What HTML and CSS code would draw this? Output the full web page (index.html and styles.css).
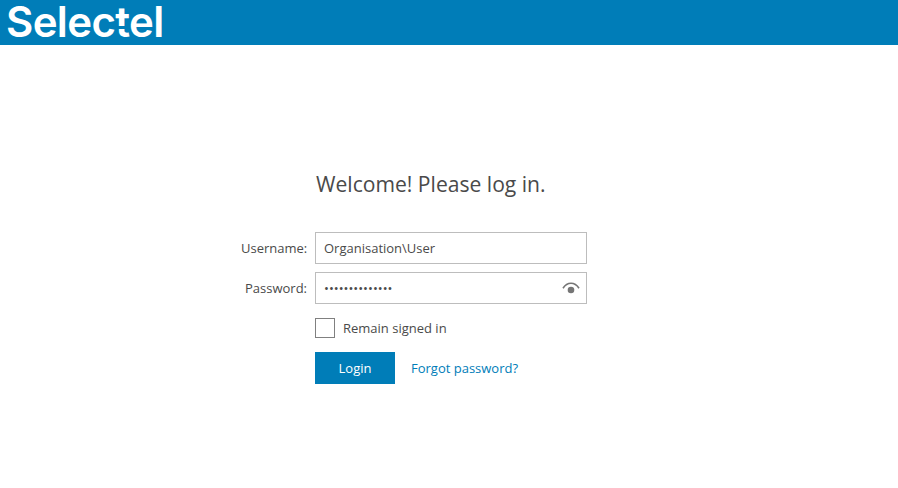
FILE: index.html
```html
<!DOCTYPE html>
<html lang="en">
<head>
  <meta charset="UTF-8">
  <meta name="viewport" content="width=device-width, initial-scale=1.0">
  <title>Login</title>
  <link rel="stylesheet" href="styles.css">
</head>
<body>
  <header class="top-bar">
    <span class="logo">Selectel</span>
  </header>

  <main class="login">
    <h1 class="login-title">Welcome! Please log in.</h1>

    <form class="login-form">
      <label class="field-label" for="username">Username:</label>
      <input class="field-input" type="text" id="username" value="Organisation\User">

      <label class="field-label" for="password">Password:</label>
      <div class="password-box">
        <input class="field-input" type="password" id="password" value="12345678901234">
        <svg class="eye" width="18" height="12" viewBox="0 0 18 12">
          <path d="M1 6.2C3.2 2.8 5.9 1.2 9 1.2s5.8 1.6 8 5" fill="none" stroke="#757575" stroke-width="1.6"/>
          <circle cx="9" cy="8" r="3.3" fill="#757575"/>
        </svg>
      </div>

      <div class="remain">
        <input class="remain-check" type="checkbox" id="remain">
        <label for="remain">Remain signed in</label>
      </div>

      <div class="actions">
        <button class="login-btn" type="button">Login</button>
        <a class="forgot" href="#">Forgot password?</a>
      </div>
    </form>
  </main>
</body>
</html>
```

FILE: styles.css
```css
body {
  font-family: "Open Sans", Arial, sans-serif;
  font-size: 13px;
  color: #4a4a4a;
  margin: 0;
  padding: 0;
  background: #fff;
}

.top-bar {
  background: #007db8;
  height: 45px;
  padding-top: 1px;
  padding-left: 6px;
  box-sizing: border-box;
}

.logo {
  display: block;
  position: relative;
  color: #fff;
  font-family: Inter, "Open Sans", sans-serif;
  font-size: 42px;
  font-weight: 600;
  line-height: 41px;
  letter-spacing: -0.65px;
}

/* break in the stem of the t */
.logo::after {
  content: "";
  position: absolute;
  left: 111px;
  top: 25px;
  width: 10px;
  height: 3px;
  background: #007db8;
}

.login {
  padding: 125px 0 0 241px;
}

.login-title {
  font-size: 21.1px;
  font-weight: 400;
  line-height: 28px;
  color: #4a4a4a;
  margin: 0 0 34px 75px;
  white-space: nowrap;
}

.login-form {
  display: grid;
  grid-template-columns: 66px 272px;
  column-gap: 8px;
  row-gap: 8px;
  align-items: center;
}

.field-label {
  text-align: right;
  white-space: nowrap;
}

.field-input {
  display: block;
  width: 100%;
  height: 32px;
  box-sizing: border-box;
  border: 1px solid #bdbdbd;
  padding: 0 8px;
  font-family: inherit;
  font-size: 13px;
  color: #4a4a4a;
  border-radius: 0;
  outline: none;
}

.password-box {
  position: relative;
}

.eye {
  position: absolute;
  right: 7px;
  top: 10px;
}

.remain {
  grid-column: 2;
  display: flex;
  align-items: center;
  gap: 8px;
  height: 20px;
  margin-top: 6px;
}

.remain-check {
  appearance: none;
  width: 20px;
  height: 20px;
  margin: 0;
  border: 1px solid #808080;
  background: #fff;
}

.actions {
  grid-column: 2;
  display: flex;
  align-items: center;
  gap: 16px;
  margin-top: 6px;
}

.login-btn {
  width: 80px;
  height: 32px;
  background: #007db8;
  color: #fff;
  border: none;
  font-family: inherit;
  font-size: 13px;
  cursor: pointer;
}

.forgot {
  color: #007db8;
  text-decoration: none;
}
```
